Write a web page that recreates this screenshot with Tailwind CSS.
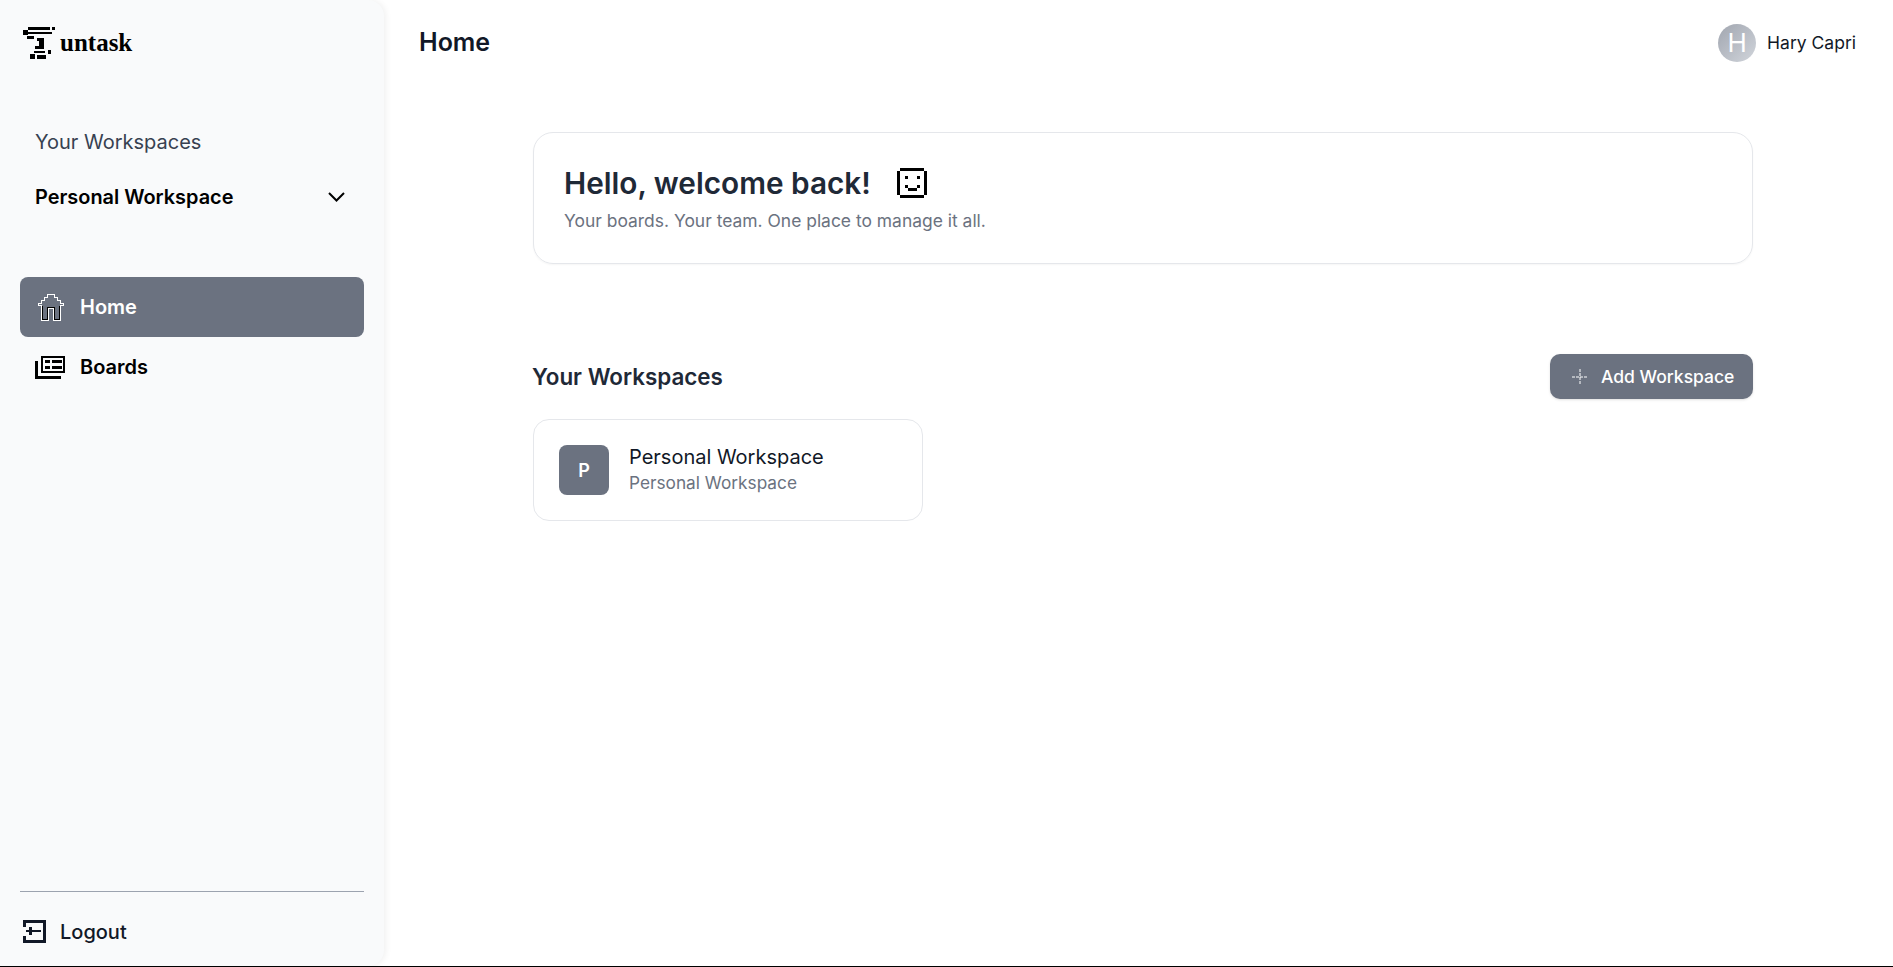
<!DOCTYPE html>
<html lang="en">
<head>
  <meta charset="UTF-8" />
  <meta name="viewport" content="width=device-width, initial-scale=1.0" />
  <title>Untask</title>
  <script src="https://cdn.jsdelivr.net/npm/@tailwindcss/browser@4"></script>
</head>
<body class="bg-white font-['Inter',sans-serif]">
  <div class="flex h-[967px] border-b border-black box-border overflow-hidden">

    <!-- Sidebar -->
    <aside class="w-[384px] shrink-0 h-full bg-[#f9fafb] rounded-r-2xl shadow-[2px_0_6px_rgba(0,0,0,0.06)] flex flex-col px-5">
      <div class="h-[85px] flex items-center pl-[3px]">
        <svg width="32" height="32" viewBox="0 0 32 32" shape-rendering="crispEdges" fill="#000">
          <path d="M5 0h22v3H5zM29 0h3v3h-3zM0 3h5v5H0zM5 5h24v2H5zM4 9h7v3H4zM14 11h7v3h-7zM16 14h5v5h-5zM12 19h9v3h-9zM11 24h11v2H11zM25 23h3v4h-3zM7 27h5v5H7zM14 28h9v4h-9z" />
        </svg>
        <span class="ml-[5px] font-['Liberation_Serif',serif] font-bold text-[25px] text-black">untask</span>
      </div>

      <div class="mt-[42px] pl-[15px] text-[20px] leading-[30px] text-[#374151]">Your Workspaces</div>
      <div class="mt-[25px] pl-[15px] pr-[19px] flex items-center justify-between">
        <span class="text-[19.9px] leading-[30px] font-semibold text-black">Personal Workspace</span>
        <svg width="17" height="10" viewBox="0 0 17 10" fill="none" stroke="#000" stroke-width="2"><path d="M1 1l7.5 7.5L16 1" /></svg>
      </div>

      <nav class="mt-[65px] flex flex-col">
        <a class="h-[60px] rounded-lg bg-[#6b7280] flex items-center pl-[17px] gap-[16px] text-[20px] font-semibold text-white">
          <svg width="27" height="27" viewBox="0 0 26 27" shape-rendering="crispEdges" fill="none">
            <path stroke="#fff" d="M0.5 11.5V9.5H3.5V6.5H6.5V3.5H9.5V0.5H16.5V3.5H19.5V6.5H22.5V9.5H25.5V11.5H22.5V26.5H15.5V14.5H10.5V26.5H3.5V11.5Z" />
            <path stroke="#000" d="M4.5 12V25.5H9.5V13.5H16.5V25.5H21.5V12" />
          </svg>
          Home
        </a>
        <a class="h-[60px] flex items-center pl-[15px] gap-[15px] text-[20px] font-semibold text-black">
          <svg width="30" height="23" viewBox="0 0 30 23" shape-rendering="crispEdges" fill="#000">
            <path d="M6 0h24v17H6zM8 2v13h20V2z" fill-rule="evenodd" />
            <path d="M10 4h5v3h-5zM17 4h10v3H17zM10 10h5v3h-5zM17 10h10v3H17zM0 5h3v15h23v3H0z" />
          </svg>
          Boards
        </a>
      </nav>

      <div class="mt-auto border-t border-[#9ca3af] h-[75px] flex items-center pl-[3px] pt-[5px] gap-[14px] text-[20px] font-medium text-[#111827]">
        <svg width="23" height="23" viewBox="0 0 23 23" shape-rendering="crispEdges" fill="#111827">
          <path d="M0 0h23v23H0v-7h3v4h17V3H3v4H0z" />
          <path d="M3 10h15v2H3zM6 7h3v3H6zM6 12h3v3H6z" />
        </svg>
        Logout
      </div>
    </aside>

    <!-- Main -->
    <main class="flex-1 min-w-0 flex flex-col">
      <header class="h-[85px] flex items-center justify-between pl-[35px] pr-[37px]">
        <h1 class="text-[25px] font-semibold text-[#111827]">Home</h1>
        <div class="flex items-center gap-[11px]">
          <div class="w-[38px] h-[38px] rounded-full bg-gradient-to-br from-[#a1a6b0] to-[#d1d5db] flex items-center justify-center text-white text-[26px]">H</div>
          <span class="text-[17.5px] pt-px text-[#111827]">Hary Capri</span>
        </div>
      </header>

      <div class="ml-[149px] w-[1220px] pt-[47px]">
        <section class="h-[132px] rounded-[20px] border border-[#e5e7eb] shadow-[0_1px_2px_rgba(0,0,0,0.04)] px-[30px] pt-[3px] flex flex-col justify-center">
          <div class="flex items-center gap-[26px]">
            <h2 class="text-[29.75px] leading-[36px] font-semibold text-[#1f2937]">Hello, welcome back!</h2>
            <svg width="30" height="30" viewBox="0 0 20 20" shape-rendering="crispEdges" fill="#000">
              <path d="M2 0h16v2H2zM2 18h16v2H2zM0 2h2v16H0zM18 2h2v16h-2zM5 5h2v2H5zM13 5h2v2h-2zM5 11h2v2H5zM13 11h2v2h-2zM7 13h6v2H7z" />
            </svg>
          </div>
          <p class="mt-[7px] text-[17.45px] leading-[26px] text-[#6b7280]">Your boards. Your team. One place to manage it all.</p>
        </section>

        <div class="mt-[90px] flex items-center justify-between">
          <h3 class="-ml-px text-[22.4px] font-semibold text-[#1f2937]">Your Workspaces</h3>
          <button class="h-[45px] w-[203px] rounded-[10px] bg-[#6b7280] flex items-center pl-[22px] pt-px gap-[13px] text-[17.5px] font-medium text-white shadow-sm">
            <svg width="16" height="16" viewBox="0 0 16 16" fill="none" stroke="#fff" stroke-dasharray="3 1">
              <path d="M8 0v16M0 8h16" />
            </svg>
            Add Workspace
          </button>
        </div>

        <a class="mt-[20px] w-[390px] h-[102px] rounded-[16px] border border-[#e5e7eb] flex items-center pl-[25px] gap-[20px]">
          <div class="w-[50px] h-[50px] rounded-lg bg-[#6b7280] flex items-center justify-center text-white font-semibold text-[18px]">P</div>
          <div>
            <div class="text-[20px] leading-[26px] -mt-[2px] mb-px text-[#111827]">Personal Workspace</div>
            <div class="text-[17.25px] leading-[24px] text-[#6b7280]">Personal Workspace</div>
          </div>
        </a>
      </div>
    </main>
  </div>
</body>
</html>
